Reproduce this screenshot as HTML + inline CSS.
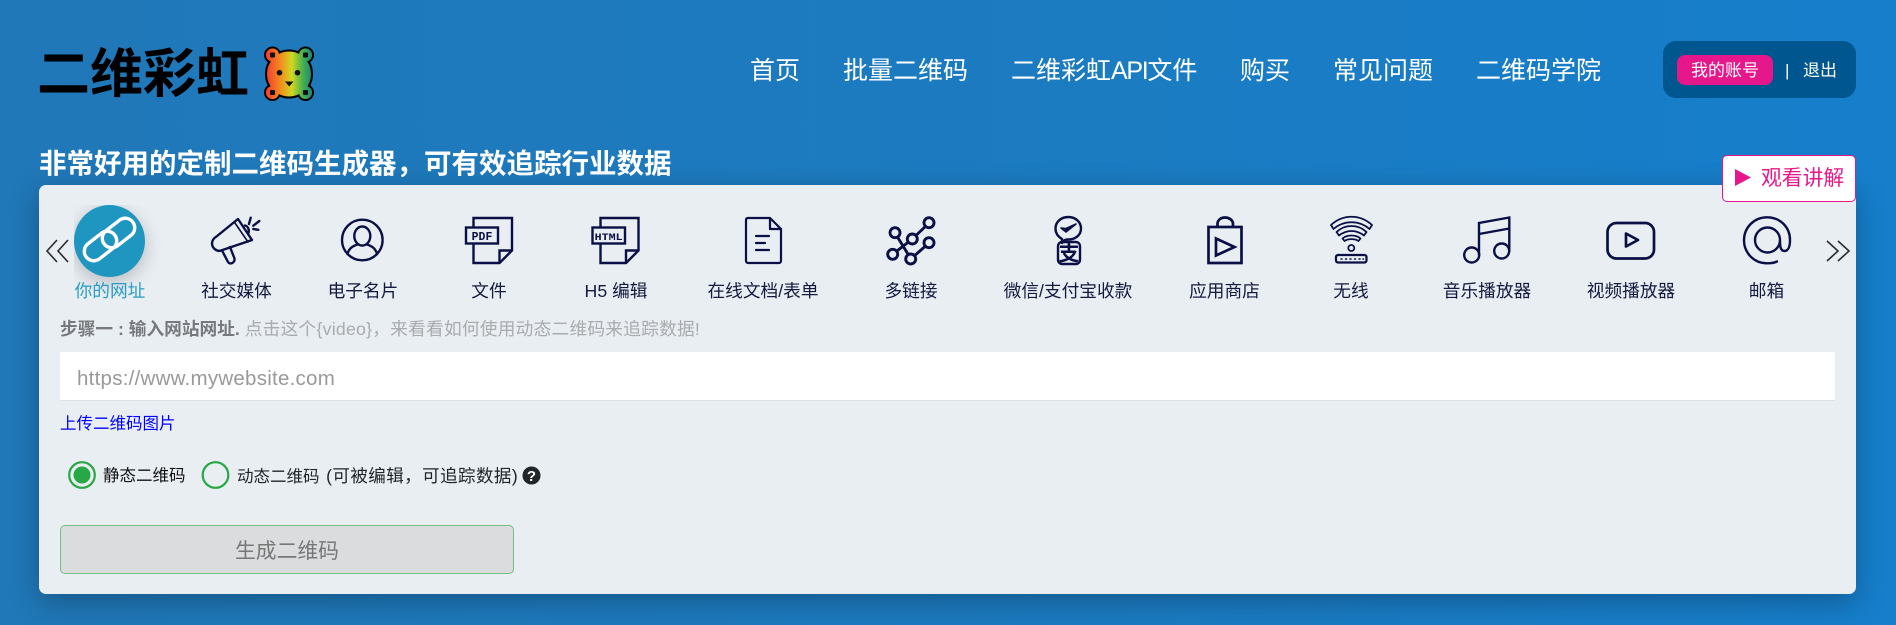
<!DOCTYPE html>
<html lang="zh"><head><meta charset="utf-8"><title>二维彩虹</title>
<style>
*{box-sizing:border-box}
html,body{margin:0;padding:0;width:1896px;height:625px;overflow:hidden}
body{position:relative;background:linear-gradient(90deg,#2078b8 0%,#1c7bc0 50%,#167ecb 100%);font-family:"Liberation Sans","Noto Sans CJK SC",sans-serif;color:#131a3e}
.a{position:absolute;white-space:nowrap;line-height:1}
.n{top:58.5px;font-size:25px;color:#fff}
.l{top:283px;font-size:17.7px;transform:translateX(-50%);color:#131a3e}
#card{position:absolute;left:39px;top:185px;width:1817px;height:409px;background:#e9eef3;border-radius:7px;box-shadow:0 8px 30px rgba(0,0,0,.28)}
svg{position:absolute;left:0;top:0}
.s{fill:none;stroke:#0a1045;stroke-width:2.4;stroke-linecap:round;stroke-linejoin:round}
</style></head><body>
<div class="a" style="left:37px;top:48px;font-size:53px;font-weight:700;color:#000">二维彩虹</div>
<div class="a n" style="left:750px">首页</div>
<div class="a n" style="left:843px">批量二维码</div>
<div class="a n" style="left:1011px">二维彩虹<span style="letter-spacing:-1.3px">API</span>文件</div>
<div class="a n" style="left:1240px">购买</div>
<div class="a n" style="left:1333px">常见问题</div>
<div class="a n" style="left:1476px">二维码学院</div>
<div class="a" style="left:1663px;top:41px;width:193px;height:57px;background:#00578f;border-radius:13px"></div>
<div class="a" style="left:1677px;top:55px;width:96px;height:30px;background:#e6178a;border-radius:8px;color:#fff;font-size:17px;line-height:31px;text-align:center">我的账号</div>
<div class="a" style="left:1785px;top:62px;font-size:17px;color:#fff">|</div>
<div class="a" style="left:1803px;top:62px;font-size:17px;color:#fff">退出</div>
<div class="a" style="left:39px;top:150px;font-size:27.5px;font-weight:700;color:#fff">非常好用的定制二维码生成器&#65292;可有效追踪行业数据</div>
<div id="card"></div>
<div class="a" style="left:1722px;top:155px;width:134px;height:47px;background:#fff;border:1.5px solid #e6178a;border-radius:5px"></div>
<div class="a" style="left:1761px;top:169px;font-size:20.8px;color:#e6178a">观看讲解</div>
<div class="a" style="left:74px;top:205px;width:100px;height:105px;overflow:hidden"><div style="position:absolute;left:0;top:0;width:71px;height:72px;border-radius:50%;background:#1e96c0;box-shadow:0 5px 18px rgba(0,0,0,.22)"></div></div>
<svg width="1896" height="625" viewBox="0 0 1896 625">
<defs><linearGradient id="g" x1="266" x2="313" y1="0" y2="0" gradientUnits="userSpaceOnUse"><stop offset="0" stop-color="#f23a2e"/><stop offset=".3" stop-color="#f38a20"/><stop offset=".55" stop-color="#cfd821"/><stop offset=".8" stop-color="#3fae4f"/><stop offset="1" stop-color="#1f7f86"/></linearGradient></defs>
<!-- logo -->
<g stroke="#000" stroke-width="2" fill="url(#g)">
<circle cx="272.500" cy="55" r="7.500"/><circle cx="305.500" cy="55" r="7.500"/><circle cx="272.500" cy="92.500" r="7.500"/><circle cx="305.500" cy="92.500" r="7.500"/>
<ellipse cx="289" cy="74" rx="23" ry="23.500"/>
</g>
<g fill="url(#g)"><circle cx="272.500" cy="55" r="6.500"/><circle cx="305.500" cy="55" r="6.500"/><circle cx="272.500" cy="92.500" r="6.500"/><circle cx="305.500" cy="92.500" r="6.500"/></g>
<g fill="#111"><rect x="270" y="52.500" width="5" height="5" rx="1"/><rect x="303" y="52.500" width="5" height="5" rx="1"/><rect x="270" y="90" width="5" height="5" rx="1"/><rect x="303" y="90" width="5" height="5" rx="1"/>
<circle cx="279.500" cy="72.700" r="2.800"/><circle cx="297.500" cy="72.700" r="2.800"/><path d="M285 81.500H293.500L289.200 86.500Z"/></g>
<!-- triangle -->
<path d="M1735 169L1751 177.500L1735 186Z" fill="#e6178a"/>
<!-- chevrons -->
<g fill="none" stroke="#2a2a30" stroke-width="1.600"><path d="M57 240L47 251L57 262M68 240L58 251L68 262"/><path d="M1827 241L1838 251L1827 261M1838 241L1849 251L1838 261"/></g>
<!-- link -->
<g fill="none" stroke="#fff" stroke-width="3.400">
<rect x="-18" y="-9.500" width="36" height="19" rx="9.500" transform="translate(100.500 246) rotate(-38)"/>
<rect x="-18" y="-9.500" width="36" height="19" rx="9.500" transform="translate(118.500 233) rotate(-38)"/>
</g>
<!-- megaphone -->
<g class="s"><path d="M238 219L252 240L221 250.500C217 252 212 248 212 243.500C212 240 214 238 216.500 236.500Z"/><path d="M235 223L248 242" style="stroke-width:1.600"/><path d="M245 225.500C248 226 249.500 230 248.500 233"/><path d="M222 250.500L228 262C230 265 235 263 234.500 258.500L230 247"/><path d="M249 224L250.700 217.700M253.300 225.700L259.300 221M253.300 229L258.300 229.800"/></g>
<!-- person -->
<g class="s"><circle cx="362.300" cy="240" r="20.300"/><ellipse cx="362.300" cy="236" rx="8" ry="9.500"/><path d="M347.500 254C349 248 353 246 357.500 244.500M377 254C375.500 248 371.500 246 367 244.500"/></g>
<!-- PDF -->
<g class="s" style="stroke-linecap:butt;stroke-linejoin:miter"><path d="M473.500 228V218H512V250.500L499.500 263H473.500V243"/><path d="M499.500 263V250.500H512"/><rect x="466" y="227.500" width="32" height="16" style="fill:#e9eef3"/></g>
<text x="482" y="240" text-anchor="middle" font-family="Liberation Mono,monospace" font-weight="700" font-size="11.500" fill="#0a1045">PDF</text>
<!-- HTML -->
<g class="s" style="stroke-linecap:butt;stroke-linejoin:miter"><path d="M600.500 228V218H638.500V250.500L626 263H600.500V243"/><path d="M626 263V250.500H638.500"/><rect x="592.500" y="227.500" width="32.500" height="16" style="fill:#e9eef3"/></g>
<text x="608.700" y="240" text-anchor="middle" font-family="Liberation Mono,monospace" font-weight="700" font-size="10.500" fill="#0a1045" textLength="28" lengthAdjust="spacingAndGlyphs">HTML</text>
<!-- doc -->
<g class="s" style="stroke-width:2.200"><path d="M770 218H748C746.500 218 746 219 746 220V261C746 262 747 263 748 263H779C780 263 781 262 781 261V229Z"/><path d="M770 218V229H781"/><path d="M756 236H769M756 243H765M756 250H769"/></g>
<!-- multi link -->
<g class="s" style="stroke-width:2.900"><path d="M895 233L911 259M912.300 239L929 223M892.700 254.300L912.300 239M910.700 259L929 243"/>
<g style="fill:#e9eef3"><circle cx="929" cy="222.700" r="5"/><circle cx="895" cy="232.700" r="5"/><circle cx="912.300" cy="239" r="5"/><circle cx="929" cy="242.700" r="5"/><circle cx="892.700" cy="254.300" r="5"/><circle cx="910.700" cy="259" r="5"/></g></g>
<!-- wechat / alipay -->
<g class="s"><path d="M1062 239C1057 236 1055.500 232 1055.500 228.500C1055.500 222 1061 217 1068.300 217C1075.500 217 1081 222 1081 228.500C1081 235 1075.500 239.500 1068.300 239.500C1066 239.500 1064 239.500 1062 243Z"/><rect x="1058" y="242" width="22" height="22" rx="4"/></g>
<path d="M1061 228L1066 232L1076 224L1066 228.500Z" fill="#0a1045" stroke="#0a1045" stroke-width="1.600" stroke-linejoin="round"/>
<text x="1069" y="260.500" text-anchor="middle" font-family="Noto Sans CJK SC,sans-serif" font-weight="700" font-size="21" fill="#0a1045">支</text>
<!-- bag -->
<g class="s" style="stroke-linecap:butt;stroke-linejoin:miter;stroke-width:2.700"><rect x="1208.500" y="227" width="33" height="36"/><path d="M1217.500 227V224C1217.500 220 1221 217.500 1225 217.500C1229 217.500 1233 220 1233 224V227"/><path d="M1216 238.500V255.500L1234.500 247Z"/></g>
<!-- wifi -->
<g class="s" style="stroke-width:1.800"><path d="M1331 225C1343 214 1360 214 1372 225L1369.500 229C1359 220 1344 220 1333.500 229Z"/><path d="M1336.500 232C1345 224 1358 224 1366.500 232L1364 235.500C1356 229.500 1347 229.500 1339 235.500Z"/><path d="M1342.500 238.500C1347 234.500 1356 234.500 1360.500 238.500L1358.500 241C1355 238.500 1348 238.500 1344.500 241Z"/><circle cx="1351.300" cy="248" r="3"/><rect x="1336" y="255" width="30.500" height="7.500" rx="2" style="stroke-width:2.200"/><path d="M1341 259H1342M1345.500 259H1346.500M1350 259H1351M1354.500 259H1355.500M1359 259H1360M1363 259H1363.500" style="stroke-width:1.500"/></g>
<!-- music -->
<g class="s" style="stroke-linejoin:miter"><circle cx="1471.700" cy="255" r="7.500"/><circle cx="1501.700" cy="251" r="7.500"/><path d="M1479 255V223L1509.300 217.500V251M1479 234L1509.300 228.500"/></g>
<!-- video -->
<g class="s" style="stroke-width:2.700"><rect x="1607.500" y="223" width="46.500" height="35.500" rx="9"/><path d="M1626 233.500V246.500L1638 240Z"/></g>
<!-- at -->
<g class="s"><circle cx="1767.500" cy="240" r="12.500"/><path d="M1777 261.500C1775 262.500 1771 263.300 1767 263.300C1754 263.300 1744 253 1744 240.300C1744 227.500 1754 217.300 1767 217.300C1780 217.300 1790 227 1790 240C1790 247 1788 251 1784.500 251C1781 251 1780 247.500 1780 241"/></g>
<!-- radios -->
<circle cx="82" cy="475" r="12.800" fill="none" stroke="#28a745" stroke-width="2.200"/><circle cx="82" cy="475" r="8.500" fill="#28a745"/>
<circle cx="215.500" cy="475" r="12.800" fill="none" stroke="#28a745" stroke-width="2.200"/>
<circle cx="531.500" cy="475.500" r="9" fill="#212529"/>
<text x="531.500" y="481" text-anchor="middle" font-family="Liberation Sans,sans-serif" font-weight="700" font-size="15" fill="#fff">?</text>
</svg>
<div class="a l" style="left:110px;color:#2a9cc4">你的网址</div>
<div class="a l" style="left:236.500px">社交媒体</div>
<div class="a l" style="left:363px">电子名片</div>
<div class="a l" style="left:489px">文件</div>
<div class="a l" style="left:616px">H5 编辑</div>
<div class="a l" style="left:763px">在线文档/表单</div>
<div class="a l" style="left:911px">多链接</div>
<div class="a l" style="left:1068px">微信/支付宝收款</div>
<div class="a l" style="left:1224.500px">应用商店</div>
<div class="a l" style="left:1351px">无线</div>
<div class="a l" style="left:1487px">音乐播放器</div>
<div class="a l" style="left:1631px">视频播放器</div>
<div class="a l" style="left:1766.500px">邮箱</div>
<div class="a" style="left:60px;top:321px;font-size:17.700px;color:#a9abad"><b style="color:#77797c">步骤一 : 输入网站网址.</b> <span style="letter-spacing:.24px">点击这个{video}&#65292;来看看如何使用动态二维码来追踪数据!</span></div>
<div class="a" style="left:60px;top:352px;width:1775px;height:49px;background:#fff;border-bottom:1px solid #dde1e5"></div>
<div class="a" style="left:77px;top:369px;font-size:20.500px;color:#999;letter-spacing:.25px">https://www.mywebsite.com</div>
<div class="a" style="left:60px;top:416px;font-size:16.500px;color:#00f">上传二维码图片</div>
<div class="a" style="left:103px;top:468px;font-size:16.500px;color:#111">静态二维码</div>
<div class="a" style="left:237px;top:468px;font-size:16.500px;color:#212529">动态二维码 <span style="margin-left:2px;font-size:17.500px;letter-spacing:.45px">(可被编辑&#65292;可追踪数据)</span></div>
<div class="a" style="left:60px;top:525px;width:454px;height:49px;background:#dbdcde;border:1px solid #74bf83;border-radius:5px;font-size:20.800px;line-height:51px;text-align:center;color:#777">生成二维码</div>
</body></html>
